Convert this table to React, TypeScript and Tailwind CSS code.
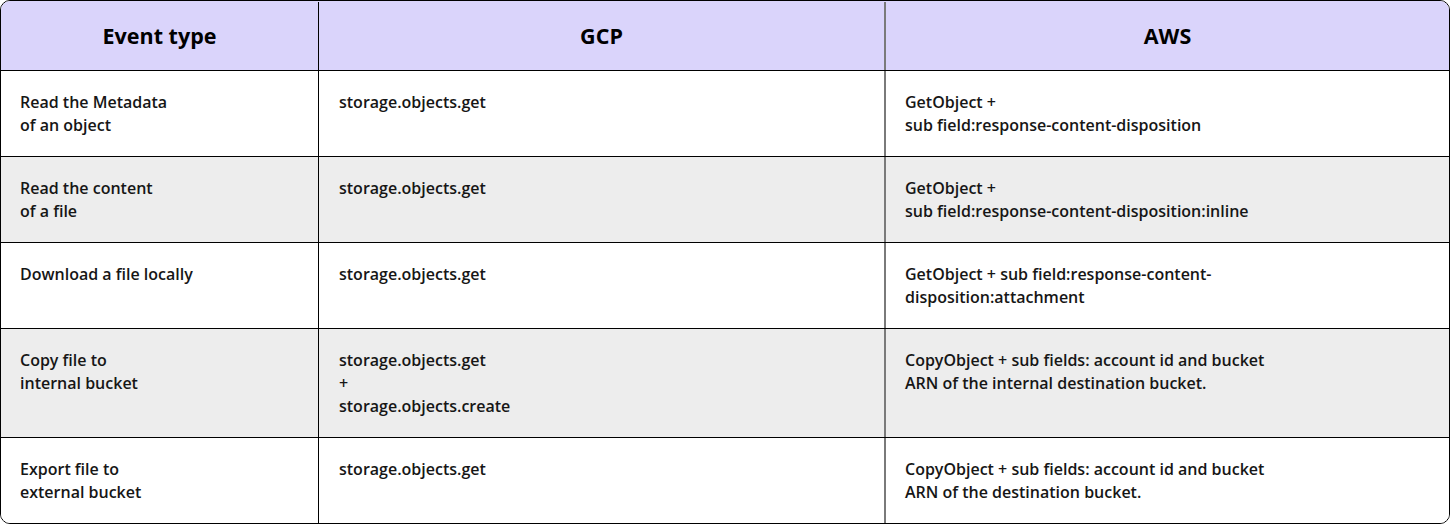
import React from 'react';

type Row = {
  event: string[];
  gcp: string[];
  aws: string[];
  shaded?: boolean;
};

const rows: Row[] = [
  {
    event: ['Read the Metadata', 'of an object'],
    gcp: ['storage.objects.get'],
    aws: ['GetObject +', 'sub field:response-content-disposition'],
  },
  {
    event: ['Read the content', 'of a file'],
    gcp: ['storage.objects.get'],
    aws: ['GetObject +', 'sub field:response-content-disposition:inline'],
    shaded: true,
  },
  {
    event: ['Download a file locally'],
    gcp: ['storage.objects.get'],
    aws: ['GetObject + sub field:response-content-', 'disposition:attachment'],
  },
  {
    event: ['Copy file to', 'internal bucket'],
    gcp: ['storage.objects.get', '+', 'storage.objects.create'],
    aws: ['CopyObject + sub fields: account id and bucket', 'ARN of the internal destination bucket.'],
    shaded: true,
  },
  {
    event: ['Export file to', 'external bucket'],
    gcp: ['storage.objects.get'],
    aws: ['CopyObject + sub fields: account id and bucket', 'ARN of the destination bucket.'],
  },
];

function Lines({ lines }: { lines: string[] }) {
  return (
    <>
      {lines.map((l, i) => (
        <div key={i} className="whitespace-nowrap">
          {l}
        </div>
      ))}
    </>
  );
}

export default function App() {
  return (
    <div className="w-[1450px] h-[524px] bg-white font-['Open_Sans',sans-serif] text-[#161616]">
      <div className="w-[1450px] h-[524px] border border-black rounded-[10px] overflow-hidden flex flex-col">
        <div className="flex h-[70px] shrink-0 bg-[#dad4fb] border-b border-black text-[21.5px] font-bold text-black pt-[1px]">
          <div className="w-[318px] shrink-0 border-r border-black flex items-center justify-center">
            Event type
          </div>
          <div className="w-[567px] shrink-0 border-r-2 border-[#7a7a7a] flex items-center justify-center">
            GCP
          </div>
          <div className="flex-1 flex items-center justify-center">AWS</div>
        </div>
        {rows.map((r, i) => (
          <div
            key={i}
            className={`flex text-[16px] font-semibold leading-[23px] ${
              r.shaded ? 'bg-[#ededed]' : 'bg-white'
            } ${i < rows.length - 1 ? 'border-b border-black' : 'flex-1'}`}
          >
            <div className="w-[318px] shrink-0 border-r border-black pl-[19px] pr-4 pt-5 pb-[19px]">
              <Lines lines={r.event} />
            </div>
            <div className="w-[567px] shrink-0 border-r-2 border-[#7a7a7a] pl-5 pr-4 pt-5 pb-[19px]">
              <Lines lines={r.gcp} />
            </div>
            <div className="flex-1 pl-[19px] pr-4 pt-5 pb-[19px]">
              <Lines lines={r.aws} />
            </div>
          </div>
        ))}
      </div>
    </div>
  );
}
